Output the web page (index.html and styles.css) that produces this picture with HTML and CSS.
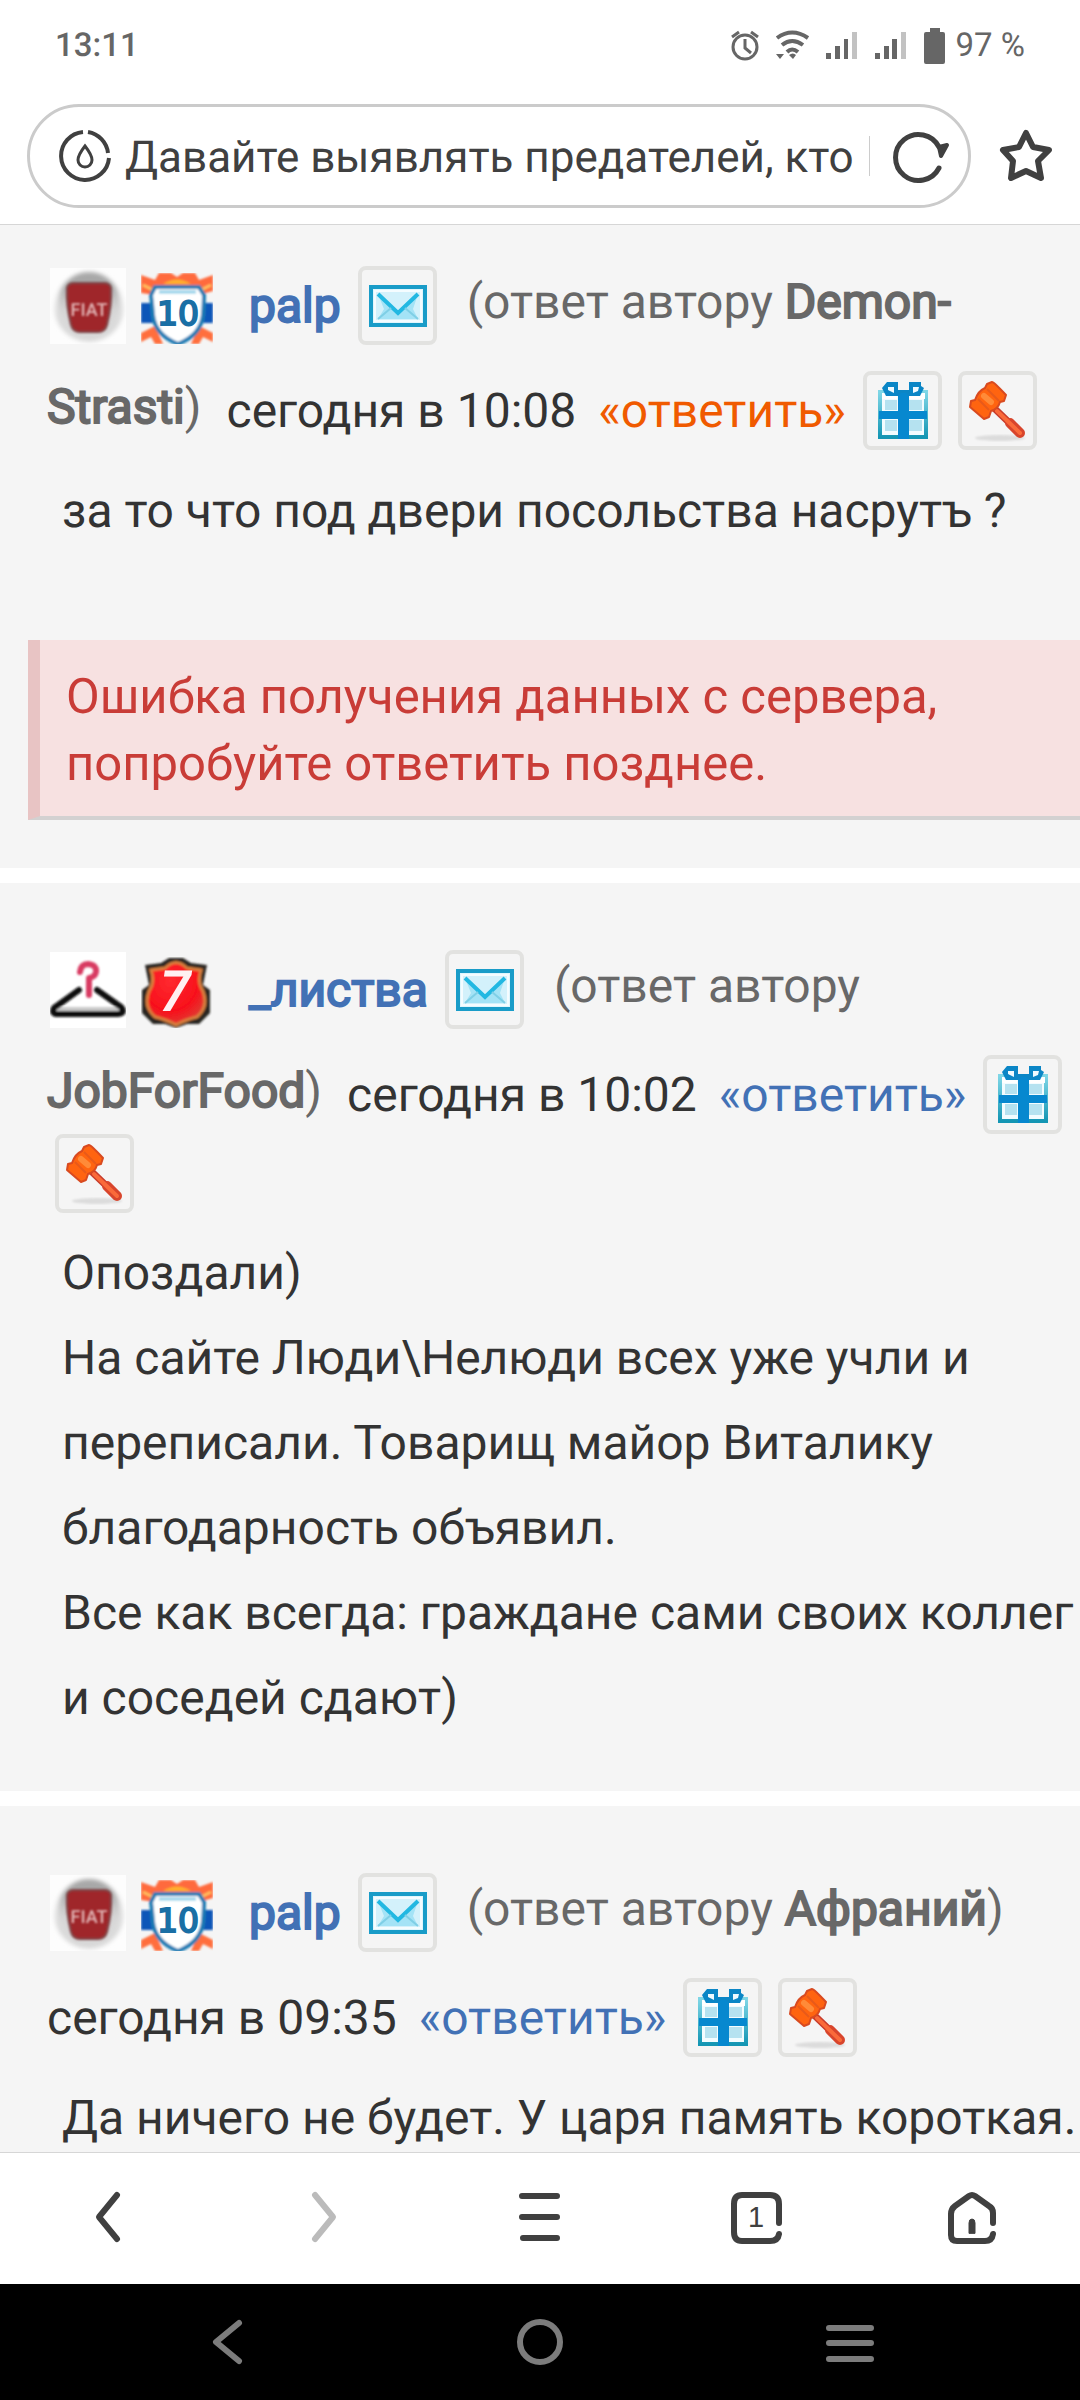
FILE: index.html
```html
<!DOCTYPE html>
<html lang="ru">
<head>
  <meta charset="UTF-8">
  <title>Давайте выявлять предателей, кто</title>
  <meta name="viewport" content="width=device-width, initial-scale=1.0">
  <link rel="stylesheet" href="styles.css">
</head>
<body>
  <!-- Shared icons -->
  <svg class="sprite" aria-hidden="true">
    <defs>
      <filter id="soft" x="-10%" y="-10%" width="120%" height="120%"><feGaussianBlur stdDeviation="1.2"/></filter>
      <filter id="softer" x="-10%" y="-10%" width="120%" height="120%"><feGaussianBlur stdDeviation="2"/></filter>
      <radialGradient id="chrome" cx="50%" cy="62%" r="52%">
        <stop offset="0.6" stop-color="#d8d8d8"/><stop offset="0.85" stop-color="#dcdcdc"/><stop offset="1" stop-color="#ececec"/>
      </radialGradient>
      <linearGradient id="shade" x1="0" y1="0" x2="0" y2="1">
        <stop offset="0" stop-color="#a8a8a8"/><stop offset="0.25" stop-color="#999" stop-opacity="0.8"/><stop offset="0.8" stop-color="#ddd" stop-opacity="0"/>
      </linearGradient>
      <linearGradient id="giftEdge" x1="0" y1="0" x2="0" y2="1">
        <stop offset="0" stop-color="#7fd6e6"/><stop offset="1" stop-color="#1496b4"/>
      </linearGradient>
      <radialGradient id="redFill" cx="40%" cy="30%" r="80%">
        <stop offset="0" stop-color="#ff2a30"/><stop offset="0.6" stop-color="#f8101c"/><stop offset="1" stop-color="#d84a3a"/>
      </radialGradient>
    </defs>
    <symbol id="fiat" viewBox="0 0 76 76">
      <rect width="76" height="76" fill="#fdfdfd"/>
      <g filter="url(#softer)">
        <circle cx="39" cy="39" r="35" fill="url(#chrome)"/>
        <circle cx="39" cy="35" r="31" fill="url(#shade)"/>
      </g>
      <path d="M17 20Q18 15 24 15H54Q60 15 61 20Q62 37 57 57Q55 64 48 64H30Q23 64 21 57Q16 37 17 20Z" fill="#9f282c" stroke="#7d4446" stroke-width="2" filter="url(#soft)"/>
    </symbol>
    <symbol id="ten" viewBox="0 0 72 71">
      <g filter="url(#soft)">
        <path d="M0 2L14 7L18 0H30L36 4L42 0H54L58 7L72 2V18L58 22H14L0 20Z" fill="#ff6a3c"/>
        <path d="M2 12L14 18M70 12L58 18" stroke="#ffc060" stroke-width="3"/>
        <path d="M22 11Q36 2 50 11Z" fill="#ffb02e"/>
        <rect y="30" width="12" height="20" fill="#0757b8"/>
        <rect x="60" y="30" width="12" height="20" fill="#0757b8"/>
        <path d="M0 60L14 53L22 71H14L10 64L0 69ZM72 60L58 53L50 71H58L62 64L72 69Z" fill="#ff6e3c"/>
        <path d="M14 14H58L63 22Q63 30 62 42Q60 62 37 71Q14 62 12 42Q11 30 10 22Z" fill="#fff" stroke="#1d7cb4" stroke-width="4"/>
        <path d="M18 19H55" stroke="#8fd0e8" stroke-width="3"/>
      </g>
    </symbol>
    <symbol id="hanger" viewBox="0 0 76 76">
      <rect width="76" height="76" fill="#fff"/>
      <g filter="url(#soft)" fill="none" stroke-linecap="round" stroke-linejoin="round">
        <path d="M8 57H68" stroke="#c9c9c9" stroke-width="4"/>
        <path d="M29 38L4 56Q1 62 8 62H68Q76 61 71 55L47 38" stroke="#111" stroke-width="6"/>
        <path d="M30 20Q31 12 38 12Q47 13 46 20Q45 25 39 26V43" stroke="#d83a62" stroke-width="6"/>
      </g>
    </symbol>
    <symbol id="seven" viewBox="0 0 72 71">
      <g filter="url(#soft)">
        <path d="M4 8L20 6L28 1H42L50 6L66 8L62 28L69 33V56L58 67H46L35 71L24 67H12L1 56V33L8 28Z" fill="#2b2724"/>
        <path d="M10 13L24 11Q35 0 46 11L60 13Q56 25 62 34Q68 50 56 60Q44 63 35 68Q26 63 14 60Q2 50 8 34Q14 25 10 13Z" fill="url(#redFill)" stroke="#d9803e" stroke-width="3"/>
      </g>
    </symbol>
    <symbol id="mail" viewBox="4 4 71 71">
      <rect x="13" y="21" width="54" height="38" fill="#dff6fd" stroke="#199cc8" stroke-width="4"/>
      <rect x="17" y="25" width="46" height="30" fill="#d3f1fb" stroke="#f4fcff" stroke-width="2"/>
      <path d="M20 28L40 46L60 28L55 43L60 53H20L26 43Z" fill="#a4e3f6"/>
      <path d="M20 28L40 47L60 28" fill="none" stroke="#22b8e2" stroke-width="4"/>
      <path d="M20 53L33 42M60 53L47 42" stroke="#7fcfe6" stroke-width="2"/>
    </symbol>
    <symbol id="gift" viewBox="4 4 71 71">
      <rect x="17" y="21" width="46" height="45" fill="#f2fcff" stroke="url(#giftEdge)" stroke-width="4"/>
      <path d="M22 29H34V39H22ZM46 29H59V39H46ZM22 49H34V60H22ZM46 49H59V60H46Z" fill="#b5e2f0"/>
      <path d="M19 22H34V28H19ZM46 22H62V28H46Z" fill="#fff"/>
      <path d="M35 19H46V68H35ZM16 40H64V48H16Z" fill="#0788cf"/>
      <path d="M24 11H35V19H46V11H58V15L61 17L57 25H46L43 22H38L35 25H23L19 17Z" fill="#0b86c6"/>
      <path d="M25 16H31V22L25 19ZM50 16H56L55 20L50 22Z" fill="#effaff"/>
    </symbol>
    <symbol id="gavel" viewBox="4 4 71 71">
      <ellipse cx="42" cy="67" rx="25" ry="3" fill="#dcdcdc" filter="url(#soft)"/>
      <path d="M37 38L62 62" stroke="#c83c2c" stroke-width="7" stroke-linecap="round"/>
      <path d="M52 52L62 62" stroke="#d8452c" stroke-width="10" stroke-linecap="round"/>
      <path d="M39 40L62 62" stroke="#fa6a3a" stroke-width="4" stroke-linecap="round"/>
      <path d="M34 11Q36 11 48 24L46 30L42 31Q40 38 33 40L31 46L26 48L12 36L13 30L17 29Q20 20 27 17L29 13Z" fill="#ff6410" stroke="#d84a20" stroke-width="2" stroke-linejoin="round"/>
      <path d="M20 28L31 39M29 18L41 30" stroke="#e85a1a" stroke-width="2"/>
      <path d="M26 25L33 31" stroke="#ff8b38" stroke-width="6" stroke-linecap="round"/>
    </symbol>
  </svg>

  <header class="status-bar">
    <span>13:11</span>
    <div class="status-icons">
      <svg width="195" height="40" viewBox="728 25 195 40" aria-hidden="true">
        <g fill="none" stroke="#666" stroke-width="3">
          <circle cx="744" cy="46" r="12"/>
          <path d="M744 38V47L750 52M731 36L738 31M757 36L750 31"/>
          <path d="M776 37Q791 26 807 37M781 44Q791 36 802 44M786 51Q791 46 797 51" stroke-width="4"/>
        </g>
        <path d="M775 53H783L779 58ZM788 54Q792 51 795 54L792 58Z" fill="#666"/>
        <path d="M825 52H830V58H825ZM834 45H839V58H834ZM843 38H847V58H843ZM874 52H879V58H874ZM883 45H888V58H883ZM891 38H896V58H891Z" fill="#666"/>
        <path d="M851 31H856V58H851ZM900 31H905V58H900Z" fill="#c2c2c2"/>
      </svg>
      <svg width="22" height="36" viewBox="0 0 22 36" aria-hidden="true">
        <path d="M6 0H16V4H19Q21 4 21 6V34Q21 36 19 36H2Q0 36 0 34V6Q0 4 2 4H6Z" fill="#666"/>
      </svg>
      <span>97 %</span>
    </div>
  </header>

  <div class="address-row">
    <div class="address-bar">
      <svg class="page-icon" width="52" height="54" viewBox="0 0 52 54" fill="none" stroke="#404040" aria-hidden="true">
        <path d="M24 3A24 24 0 1 0 50 29M29 3A24 24 0 0 1 49 24" stroke-width="4"/>
        <path d="M26 17Q19 26 19 31A7 7 0 0 0 33 31Q33 26 26 17Z" stroke-width="3"/>
      </svg>
      <input type="text" aria-label="Адрес" value="Давайте выявлять предателей, кто">
      <button class="reload" aria-label="Обновить">
        <svg width="58" height="56" viewBox="0 0 58 56" fill="none" stroke="#404040" stroke-width="5" stroke-linecap="round" stroke-linejoin="round">
          <path d="M47 40A23 23 0 1 1 47 19"/>
          <path d="M55 17L49 28L47 19Z" fill="#404040" stroke-width="4"/>
        </svg>
      </button>
    </div>
    <button class="star" aria-label="В избранное">
      <svg width="56" height="56" viewBox="0 0 56 56" fill="none" stroke="#404040" stroke-width="6" stroke-linejoin="round">
        <path d="M28 5L35 19L51 22L40 33L43 50L28 43L13 50L15 33L5 22L21 19Z"/>
      </svg>
    </button>
  </div>

  <main class="comments">
    <article class="comment first">
      <div class="meta">
        <div class="row">
          <svg class="avatar" viewBox="0 0 76 76"><use href="#fiat"/><text x="39" y="48">FIAT</text></svg>
          <svg class="badge" viewBox="0 0 72 71"><use href="#ten"/><text x="37" y="52">10</text></svg>
          <a class="author" href="#">palp</a>
          <button class="tool" aria-label="Письмо"><svg><use href="#mail"/></svg></button>
          <span class="reply-to">(ответ автору <b>Demon-</b></span>
        </div>
        <div class="row">
          <span class="reply-to"><b>Strasti</b>)</span>
          <span class="date">сегодня в 10:08</span>
          <a class="answer active" href="#">«ответить»</a>
          <button class="tool" aria-label="Подарок"><svg><use href="#gift"/></svg></button>
          <button class="tool" aria-label="Жалоба"><svg><use href="#gavel"/></svg></button>
        </div>
      </div>
      <p class="message">за то что под двери посольства насрутъ ?</p>
      <div class="error">Ошибка получения данных с сервера,<br>попробуйте ответить позднее.</div>
    </article>

    <article class="comment">
      <div class="meta wrapped">
        <div class="row">
          <svg class="avatar"><use href="#hanger"/></svg>
          <svg class="badge red" viewBox="0 0 72 71"><use href="#seven"/><text x="34" y="53">7</text></svg>
          <a class="author" href="#">_листва</a>
          <button class="tool" aria-label="Письмо"><svg><use href="#mail"/></svg></button>
          <span class="reply-to">(ответ автору</span>
        </div>
        <div class="row">
          <span class="reply-to"><b>JobForFood</b>)</span>
          <span class="date">сегодня в 10:02</span>
          <a class="answer" href="#">«ответить»</a>
          <button class="tool" aria-label="Подарок"><svg><use href="#gift"/></svg></button>
          <button class="tool" aria-label="Жалоба"><svg><use href="#gavel"/></svg></button>
        </div>
      </div>
      <p class="message">Опоздали)<br>На сайте Люди\Нелюди всех уже учли и переписали. Товарищ майор Виталику благодарность объявил.<br>Все как всегда: граждане сами своих коллег и соседей сдают)</p>
    </article>

    <article class="comment">
      <div class="meta">
        <div class="row">
          <svg class="avatar" viewBox="0 0 76 76"><use href="#fiat"/><text x="39" y="48">FIAT</text></svg>
          <svg class="badge" viewBox="0 0 72 71"><use href="#ten"/><text x="37" y="52">10</text></svg>
          <a class="author" href="#">palp</a>
          <button class="tool" aria-label="Письмо"><svg><use href="#mail"/></svg></button>
          <span class="reply-to">(ответ автору <b>Афраний</b>)</span>
        </div>
        <div class="row">
          <span class="date">сегодня в 09:35</span>
          <a class="answer" href="#">«ответить»</a>
          <button class="tool" aria-label="Подарок"><svg><use href="#gift"/></svg></button>
          <button class="tool" aria-label="Жалоба"><svg><use href="#gavel"/></svg></button>
        </div>
      </div>
      <p class="message">Да ничего не будет. У царя память короткая.</p>
    </article>
  </main>

  <nav class="toolbar">
    <button aria-label="Назад">
      <svg width="56" height="56" viewBox="0 0 56 56"><path d="M37 6L19 28L37 50"/></svg>
    </button>
    <button class="disabled" aria-label="Вперёд" disabled>
      <svg width="56" height="56" viewBox="0 0 56 56"><path d="M19 6L37 28L19 50"/></svg>
    </button>
    <button aria-label="Меню">
      <svg width="56" height="56" viewBox="0 0 56 56"><path d="M10 7H45M10 28H45M11 49H45"/></svg>
    </button>
    <button aria-label="Вкладки">
      <svg width="56" height="56" viewBox="0 0 56 56">
        <path d="M51 34V15Q51 6 42 6H14Q6 6 6 15V43Q6 52 14 52H42Q50 52 51 45"/>
        <text x="28" y="38">1</text>
      </svg>
    </button>
    <button aria-label="Домой">
      <svg width="56" height="56" viewBox="0 0 56 56">
        <path d="M49 34V24Q49 19 45 17L31 7Q28 5 25 7L11 17Q7 20 7 25V46Q7 52 13 52H41Q48 52 49 45"/>
        <path class="door" d="M25 44V34Q25 30 28 30Q31 30 31 34V44Z"/>
      </svg>
    </button>
  </nav>

  <footer class="system-nav">
    <button aria-label="Назад">
      <svg width="56" height="56" viewBox="0 0 56 56"><path d="M40 9L17 28L40 47"/></svg>
    </button>
    <button aria-label="Главный экран">
      <svg width="56" height="56" viewBox="0 0 56 56"><circle cx="28" cy="28" r="20"/></svg>
    </button>
    <button aria-label="Недавние">
      <svg width="56" height="56" viewBox="0 0 56 56"><path d="M4 14H46M4 29H46M4 45H46"/></svg>
    </button>
  </footer>
</body>
</html>
```
FILE: styles.css
```css
:root {
  --panel: #f5f5f5;
  --line: #d6d6d6;
  --text-color: #333;
  --muted: #686868;
  --link: #4271b5;
  --icon: #404040;
}

* {
  box-sizing: border-box;
}

body {
  margin: 0;
  height: 100vh;
  display: flex;
  flex-direction: column;
  background: #fff;
  color: var(--text-color);
  font-family: Roboto, sans-serif;
  font-size: 48px;
  text-rendering: geometricPrecision;
}

button {
  margin: 0;
  padding: 0;
  border: none;
  background: none;
}

svg {
  display: block;
  flex: none;
}

a {
  text-decoration: none;
}

.sprite {
  position: absolute;
  width: 0;
  height: 0;
}

/* Status bar */
.status-bar {
  flex: none;
  display: flex;
  justify-content: space-between;
  align-items: center;
  height: 90px;
  padding: 1px 55px 0;
  font-size: 33px;
  font-weight: 500;
  color: #666;
}

.status-icons {
  display: flex;
  align-items: center;
  font-weight: 400;
}

.status-icons span {
  margin-left: 10px;
}

/* Address bar */
.address-row {
  flex: none;
  display: flex;
  align-items: center;
  height: 135px;
  padding: 0 26px 2px 27px;
  border-bottom: 1px solid var(--line);
}

.address-bar {
  flex: 1;
  display: flex;
  align-items: center;
  min-width: 0;
  height: 104px;
  padding: 0 18px 0 29px;
  border: 3px solid #cbcbcb;
  border-radius: 52px;
}

.address-bar input {
  flex: 1;
  min-width: 0;
  height: 60px;
  margin-left: 14px;
  padding: 2px 0 0;
  border: none;
  outline: none;
  background: none;
  color: var(--icon);
  font: 44px/58px Roboto, sans-serif;
  text-rendering: geometricPrecision;
}

.reload {
  display: flex;
  align-items: center;
  height: 40px;
  margin-left: 14px;
  padding-left: 22px;
  border-left: 1px solid #ccc;
}

.star {
  margin-left: 27px;
}

/* Comments */
.comments {
  flex: 1;
  min-height: 0;
  overflow: hidden;
}

.comment {
  padding-top: 67px;
  padding-bottom: 51px;
  background: var(--panel);
}

.comment + .comment {
  margin-top: 15px;
}

.first {
  padding-top: 41px;
  padding-bottom: 48px;
}

.meta {
  padding: 0 0 18px 47px;
}

.wrapped {
  padding-bottom: 17px;
}

.row {
  display: flex;
  flex-wrap: wrap;
  align-items: center;
  line-height: 56px;
  white-space: nowrap;
}

.row + .row {
  margin-top: 26px;
}

.avatar {
  width: 76px;
  height: 76px;
  margin-left: 3px;
}

.badge {
  width: 72px;
  height: 71px;
  margin: 5px 0 0 15px;
}

.avatar text,
.badge text,
.toolbar text {
  text-anchor: middle;
}

.avatar text {
  font-size: 18px;
  font-weight: 500;
  fill: #e3b9b9;
  filter: blur(1px);
}

.badge text {
  font-family: "DejaVu Sans", sans-serif;
  font-size: 33px;
  fill: #1a6fa5;
  stroke: #1a6fa5;
  stroke-width: 2px;
}

.badge.red text {
  font-family: Roboto, sans-serif;
  font-size: 54px;
  font-style: italic;
  fill: #fff0f2;
  stroke: #fff0f2;
}

/* Regular-weight letters thickened with a stroke */
.author,
.reply-to b {
  font-weight: 400;
  -webkit-text-stroke: 2px currentColor;
}

.author {
  margin-left: 36px;
  margin-right: 9px;
  color: var(--link);
}

.reply-to {
  padding-bottom: 8px;
  color: var(--muted);
}

.tool {
  width: 79px;
  height: 79px;
  margin: 0 8px;
  border: 4px solid #e2e2e0;
  border-radius: 8px;
}

.tool svg {
  width: 71px;
  height: 71px;
}

.tool + .reply-to {
  margin-left: 22px;
}

.reply-to + .date {
  margin-left: 25px;
}

.answer {
  margin-left: 22px;
  margin-right: 9px;
  color: var(--link);
}

.answer.active {
  color: #f05a00;
}

.message {
  margin: 0;
  padding: 0 0 0 62px;
  line-height: 85px;
}

.error {
  margin: 87px 0 0 28px;
  padding: 23px 0 19px 26px;
  border-left: 12px solid #e8c4c4;
  border-bottom: 4px solid #d3d1d1;
  background: #f7e1e1;
  color: #c93c37;
  font-size: 49px;
  line-height: 67px;
}

/* Browser toolbar */
.toolbar {
  flex: none;
  display: flex;
  height: 132px;
  padding-bottom: 3px;
  border-top: 1px solid var(--line);
  background: #fff;
}

.toolbar button,
.system-nav button {
  flex: 1;
  display: flex;
  align-items: center;
  justify-content: center;
}

.toolbar path {
  fill: none;
  stroke: var(--icon);
  stroke-width: 6;
  stroke-linecap: round;
  stroke-linejoin: round;
}

.toolbar .disabled path {
  stroke: #bbb;
}

.toolbar .door {
  fill: var(--icon);
  stroke-width: 1;
}

.toolbar text {
  font-size: 29px;
  fill: var(--icon);
}

/* System navigation */
.system-nav {
  flex: none;
  display: flex;
  height: 116px;
  padding: 0 71px;
  background: #000;
}

.system-nav path,
.system-nav circle {
  fill: none;
  stroke: #7c7c7c;
  stroke-width: 6;
  stroke-linecap: round;
  stroke-linejoin: round;
}
```
